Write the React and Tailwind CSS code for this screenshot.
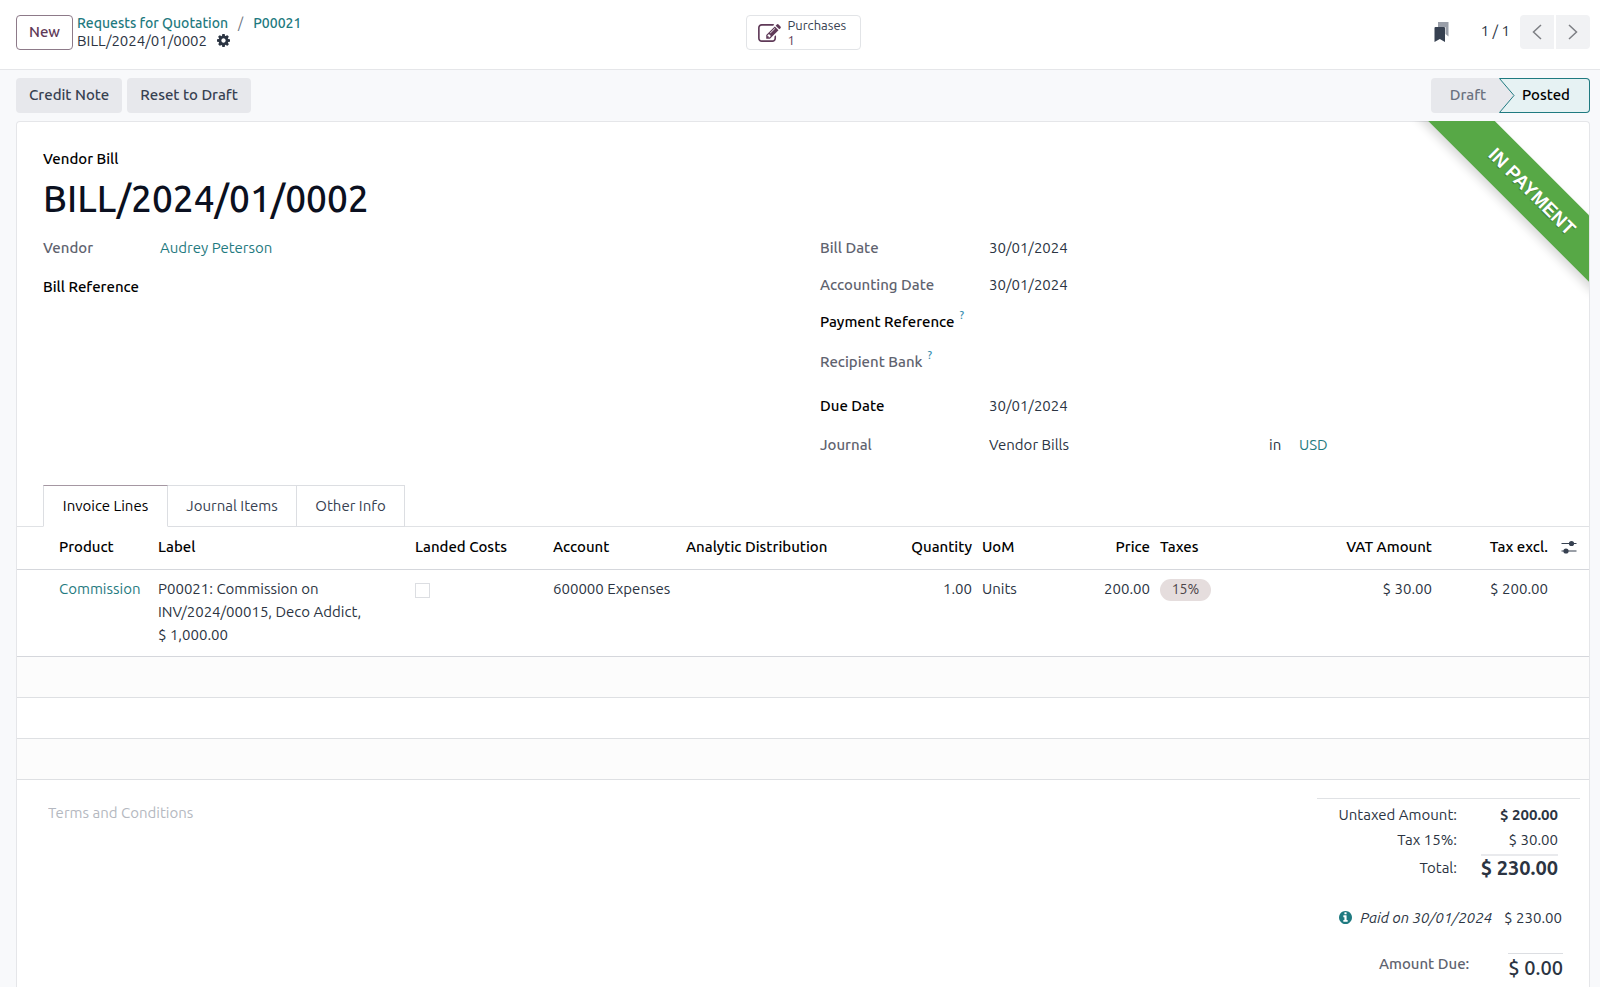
import React from "react";

const EMPTY_ROWS = [
  { id: 1, className: "h-[41px] border-b border-[#dee0e3] bg-[#fcfcfc]" },
  { id: 2, className: "h-[41px] border-b border-[#dee0e3] bg-white" },
  { id: 3, className: "h-[41px] border-b border-[#dee0e3] bg-[#fcfcfc]" },
];

function GearIcon() {
  return (
    <svg viewBox="0 128 1536 1536" className="size-[13px]" fill="currentColor" aria-hidden="true">
      <path d="M1024 896q0-106-75-181t-181-75-181 75-75 181 75 181 181 75 181-75 75-181zm512-109v222q0 12-8 23t-20 13l-185 28q-19 54-39 91 35 50 107 138 10 12 10 25t-9 23q-27 37-99 108t-94 71q-12 0-26-9l-138-108q-44 23-91 38-16 136-29 186-7 28-36 28h-222q-14 0-24.500-8.500t-11.500-21.500l-28-184q-49-16-90-37l-141 107q-10 9-25 9-14 0-25-11-126-114-165-168-7-10-7-23 0-12 8-23 15-21 51-66.500t54-70.500q-27-50-41-99l-183-27q-13-2-21-12.500t-8-23.500v-222q0-12 8-23t19-13l186-28q14-46 39-92-40-57-107-138-10-12-10-24 0-10 9-23 26-36 98.500-107.500t94.500-71.500q13 0 26 10l138 107q44-23 91-38 16-136 29-186 7-28 36-28h222q14 0 24.500 8.500t11.500 21.500l28 184q49 16 90 37l142-107q9-9 24-9 13 0 25 10 129 119 165 170 7 8 7 22 0 12-8 23-15 21-51 66.500t-54 70.500q26 50 41 98l183 28q13 2 21 12.500t8 23.500z" />
    </svg>
  );
}

function EditIcon() {
  return (
    <svg viewBox="0 128 1792 1408" className="h-[18px] w-[23px]" fill="currentColor" aria-hidden="true">
      <path d="M888 1184l116-116-152-152-116 116v56h96v96h56zm440-720q-16-16-33 1l-350 350q-17 17-1 33t33-1l350-350q17-17 1-33zm80 594v190q0 119-84.500 203.500t-203.500 84.500h-832q-119 0-203.500-84.500t-84.500-203.500v-832q0-119 84.500-203.500t203.500-84.500h832q63 0 117 25 15 7 18 23 3 17-9 29l-49 49q-14 14-32 8-23-6-45-6h-832q-66 0-113 47t-47 113v832q0 66 47 113t113 47h832q66 0 113-47t47-113v-126q0-13 9-22l64-64q15-15 35-7t20 29zm-96-738l288 288-672 672h-288v-288zm444 132l-92 92-288-288 92-92q28-28 68-28t68 28l152 152q28 28 28 68t-28 68z" />
    </svg>
  );
}

function InfoIcon() {
  return (
    <svg viewBox="0 128 1536 1536" className="size-[13px] text-[#1f7a80]" fill="currentColor" aria-hidden="true">
      <path d="M1024 1376v-160q0-14-9-23t-23-9h-96v-512q0-14-9-23t-23-9h-320q-14 0-23 9t-9 23v160q0 14 9 23t23 9h96v320h-96q-14 0-23 9t-9 23v160q0 14 9 23t23 9h448q14 0 23-9t9-23zm-128-896v-160q0-14-9-23t-23-9h-192q-14 0-23 9t-9 23v160q0 14 9 23t23 9h192q14 0 23-9t9-23zm640 416q0 209-103 385.500t-279.500 279.500-385.500 103-385.500-103-279.500-279.500-103-385.500 103-385.500 279.500-279.500 385.500-103 385.500 103 279.500 279.500 103 385.500z" />
    </svg>
  );
}

function BookmarksIcon() {
  return (
    <svg viewBox="0 0 15 20" className="h-5 w-[15px]" aria-hidden="true">
      <path d="M4 0h10.500v14.500l-3-2.500V5H4z" fill="#9a9fa9" />
      <path d="M1.500 5H10a1 1 0 0 1 1 1v14l-5.200-3L.5 20V6a1 1 0 0 1 1-1z" fill="#374151" />
    </svg>
  );
}

function Chevron({ direction }) {
  return (
    <svg viewBox="0 0 10 16" className="h-4 w-[10px]" fill="none" stroke="#7d7f84" strokeWidth="1.500" aria-hidden="true">
      <path d={direction === "left" ? "M9 1L1.500 8L9 15" : "M1 1L8.500 8L1 15"} />
    </svg>
  );
}

function SlidersIcon() {
  return (
    <svg viewBox="0 0 16 14" className="h-[14px] w-4" aria-hidden="true">
      <path d="M0.500 3.500H15.500M0.500 11H15.500" stroke="#374151" strokeWidth="1.200" />
      <circle cx="10.500" cy="3.500" r="2.600" fill="#374151" />
      <circle cx="5" cy="11" r="2.600" fill="#374151" />
    </svg>
  );
}

function ControlPanel() {
  return (
    <header className="grid h-[70px] grid-cols-[1fr_auto_1fr] items-start border-b border-[#e5e6e9] bg-white pt-[15px] pr-[10px] pl-4">
      <div className="flex gap-1">
        <button type="button" className="h-[35px] rounded border border-[#8d7a89] px-3 pb-[2px] font-medium text-[#5f3a58]">
          New
        </button>
        <nav aria-label="Breadcrumb" className="flex flex-col leading-[17px]">
          <div className="flex gap-[10px] text-[14px] font-medium">
            <a href="#quotations" className="text-[#1f7a80]">Requests for Quotation</a>
            <span className="font-normal text-[#6b7280]">/</span>
            <a href="#p00021" className="text-[#1f7a80]">P00021</a>
          </div>
          <div className="flex items-center gap-[10px]">
            <span>BILL/2024/01/0002</span>
            <button type="button" aria-label="Actions">
              <GearIcon />
            </button>
          </div>
        </nav>
      </div>
      <button type="button" className="flex h-[35px] w-[115px] items-center gap-[7px] rounded border border-[#e2e4e7] pl-[11px] text-left text-[13px] leading-[15px] text-[#5f3a58]">
        <EditIcon />
        <span className="flex flex-col">
          <span className="text-[#374151]">Purchases</span>
          <span>1</span>
        </span>
      </button>
      <div className="flex items-center justify-end">
        <button type="button" aria-label="Bookmarks" className="mr-8">
          <BookmarksIcon />
        </button>
        <span className="mr-[10px] pb-[2px]">1 / 1</span>
        <div className="flex gap-[2px]">
          <button type="button" aria-label="Previous" className="flex h-[34px] w-[34px] items-center justify-center rounded-l bg-[#f1f2f4]">
            <Chevron direction="left" />
          </button>
          <button type="button" aria-label="Next" className="flex h-[34px] w-[34px] items-center justify-center rounded-r bg-[#f1f2f4]">
            <Chevron direction="right" />
          </button>
        </div>
      </div>
    </header>
  );
}

function StatusBar() {
  return (
    <div className="flex items-center justify-between py-2 font-medium">
      <div className="flex gap-[5px]">
        <button type="button" className="h-[35px] rounded bg-[#e7e8ec] px-[13px] pb-[2px] text-[#374151]">Credit Note</button>
        <button type="button" className="h-[35px] rounded bg-[#e7e8ec] px-[13px] pb-[2px] text-[#374151]">Reset to Draft</button>
      </div>
      <div className="flex">
        <button type="button" className="h-[35px] w-[68px] rounded-l bg-[#e7e8ec] pb-[2px] pl-[6px] text-[#6b7280]">Draft</button>
        <button type="button" aria-current="step" className="flex h-[35px] text-black">
          <svg viewBox="0 0 16 35" className="h-[35px] w-4" aria-hidden="true">
            <path d="M0 0H16V35H0z" fill="#e6f2f3" />
            <path d="M0 0L15 17.500L0 35z" fill="#e7e8ec" />
            <path d="M16 0.500H0.500L15 17.500L0.500 34.500H16" fill="none" stroke="#1f7a80" />
          </svg>
          <span className="flex h-[35px] w-[75px] items-center rounded-r border-y border-r border-[#1f7a80] bg-[#e6f2f3] pb-[2px] pl-[7px]">Posted</span>
        </button>
      </div>
    </div>
  );
}

function Ribbon() {
  return (
    <div className="pointer-events-none absolute -top-px right-0 size-[180px] overflow-hidden">
      <div className="absolute top-[40px] right-[-64px] flex h-[47px] w-[256px] rotate-45 items-center justify-center bg-[#57a846] pl-5 font-['Liberation_Sans',sans-serif] text-[19px] font-bold text-white shadow-[0_5px_10px_rgba(0,0,0,0.15)] [text-shadow:0_1px_1px_rgba(0,0,0,0.3)]">
        IN PAYMENT
      </div>
    </div>
  );
}

function Help() {
  return <sup className="-top-2 ml-[5px] text-[11px] font-medium text-[#3a8fb0]">?</sup>;
}

function Field({ label, strong, help, height, children }) {
  return (
    <div className={"flex items-center " + height}>
      <dt className={"w-[169px] shrink-0 font-medium " + (strong ? "text-black" : "text-[#5f636f]")}>
        {label}
        {help && <Help />}
      </dt>
      <dd className="flex-1">{children}</dd>
    </div>
  );
}

function Fields() {
  return (
    <div className="grid grid-cols-2 pt-1">
      <dl>
        <div className="flex h-[36px] items-center">
          <dt className="w-[117px] font-medium text-[#5f636f]">Vendor</dt>
          <dd><a href="#vendor" className="text-[#1f7a80]">Audrey Peterson</a></dd>
        </div>
        <div className="flex h-[42px] items-center">
          <dt className="font-medium text-black">Bill Reference</dt>
        </div>
      </dl>
      <dl className="pl-[17px]">
        <Field label="Bill Date" height="h-[36px]">30/01/2024</Field>
        <Field label="Accounting Date" height="h-[37px]">30/01/2024</Field>
        <Field label="Payment Reference" strong help height="h-[37px]" />
        <Field label="Recipient Bank" help height="h-[43px]" />
        <Field label="Due Date" strong height="h-[45px]">30/01/2024</Field>
        <Field label="Journal" height="h-[34px]">
          <span className="flex">
            <span className="w-[280px]">Vendor Bills</span>
            <span className="w-[30px]">in</span>
            <a href="#usd" className="text-[#1f7a80]">USD</a>
          </span>
        </Field>
      </dl>
    </div>
  );
}

function Tabs() {
  return (
    <div className="flex border-b border-[#e0e2e5] pl-[26px]">
      <div role="tablist" className="-mb-px flex h-[42px] text-[#374151]">
        <button type="button" role="tab" aria-selected="true" className="w-[125px] border border-[#dcdee2] border-t-[#a597a2] border-b-white bg-white pb-px text-black">Invoice Lines</button>
        <button type="button" role="tab" aria-selected="false" className="w-[129px] border-y border-r border-[#dcdee2] pb-px">Journal Items</button>
        <button type="button" role="tab" aria-selected="false" className="w-[108px] border-y border-r border-[#dcdee2] pb-px">Other Info</button>
      </div>
    </div>
  );
}

function InvoiceLines() {
  return (
    <table className="w-full table-fixed border-collapse">
      <colgroup>
        <col className="w-[136px]" />
        <col className="w-[257px]" />
        <col className="w-[138px]" />
        <col className="w-[133px]" />
        <col />
        <col className="w-[80px]" />
        <col className="w-[80px]" />
        <col className="w-[98px]" />
        <col className="w-[150px]" />
        <col className="w-[132px]" />
        <col className="w-[116px]" />
        <col className="w-[36px]" />
      </colgroup>
      <thead>
        <tr className="h-[42px] border-b border-[#d5d7dc] text-left text-black *:pb-px *:font-medium">
          <th className="pr-[5px] pl-[42px]">Product</th>
          <th className="px-[5px]">Label</th>
          <th className="px-[5px]">Landed Costs</th>
          <th className="px-[5px]">Account</th>
          <th className="px-[5px]">Analytic Distribution</th>
          <th className="px-[5px] text-right">Quantity</th>
          <th className="px-[5px]">UoM</th>
          <th className="px-[5px] text-right">Price</th>
          <th className="px-[5px]">Taxes</th>
          <th className="px-[5px] text-right">VAT Amount</th>
          <th className="px-[5px] text-right">Tax excl.</th>
          <th className="pl-2">
            <button type="button" aria-label="Optional columns" className="block">
              <SlidersIcon />
            </button>
          </th>
        </tr>
      </thead>
      <tbody>
        <tr className="h-[87px] border-b border-[#d5d7dc] align-top leading-[23px] *:pt-[7px]">
          <td className="pr-[5px] pl-[42px]"><a href="#commission" className="text-[#1f7a80]">Commission</a></td>
          <td className="px-[5px]">P00021: Commission on<br />INV/2024/00015, Deco Addict,<br />$ 1,000.00</td>
          <td className="px-[5px]">
            <input type="checkbox" aria-label="Landed Costs" className="mt-[6px] block size-[15px] appearance-none border border-[#dcdee2] bg-white" />
          </td>
          <td className="px-[5px]">600000 Expenses</td>
          <td />
          <td className="px-[5px] text-right">1.00</td>
          <td className="px-[5px]">Units</td>
          <td className="px-[5px] text-right">200.00</td>
          <td className="px-[5px]">
            <span className="mt-[2px] flex h-[22px] w-[51px] items-center justify-center rounded-full bg-[#e5dddd] pb-px text-[14px] text-[#4b4448]">15%</span>
          </td>
          <td className="px-[5px] text-right">$ 30.00</td>
          <td className="px-[5px] text-right">$ 200.00</td>
          <td />
        </tr>
        {EMPTY_ROWS.map((row) => (
          <tr key={row.id} className={row.className}>
            <td colSpan={12} />
          </tr>
        ))}
      </tbody>
    </table>
  );
}

function Totals() {
  return (
    <div className="mt-[18px] mr-[9px] w-[263px] border-t border-[#e0e2e5]">
      <dl className="grid grid-cols-[140px_1fr] pr-[22px] text-right">
        <dt className="pt-[3px] leading-[25px]">Untaxed Amount:</dt>
        <dd className="pt-[3px] font-bold leading-[25px]">$ 200.00</dd>
        <dt className="leading-[25px]">Tax 15%:</dt>
        <dd className="leading-[25px]">$ 30.00</dd>
        <dt className="pt-[2px] leading-[27px]">Total:</dt>
        <dd className="pt-[2px]">
          <span className="inline-block border-t-2 border-[#e9eaed] text-[20px] leading-[23px] font-bold">$ 230.00</span>
        </dd>
      </dl>
      <div className="mt-[24px] flex items-center justify-end gap-2 pr-[18px] leading-[26px]">
        <button type="button" aria-label="Payment details"><InfoIcon /></button>
        <em className="mr-1">Paid on 30/01/2024</em>
        <span>$ 230.00</span>
      </div>
      <div className="mt-[22px] flex justify-end gap-[39px] pr-[17px]">
        <span className="font-medium text-[#5f636f] leading-[22px]">Amount Due:</span>
        <span className="border-t border-[#dcdee2] text-[20px] leading-[28px] font-medium">$ 0.00</span>
      </div>
    </div>
  );
}

export default function App() {
  return (
    <div className="flex min-h-screen flex-col bg-[#f8f9fb] font-['Ubuntu','Noto_Sans',sans-serif] text-[15px] leading-[20px] text-[#2b3442]">
      <ControlPanel />
      <main className="flex flex-1 flex-col pr-[10px] pl-4">
        <StatusBar />
        <section className="relative flex-1 rounded-t border border-b-0 border-[#e5e6e9] bg-white pt-[27px]">
          <Ribbon />
          <div className="h-[336px] px-[26px]">
            <p className="font-medium text-black">Vendor Bill</p>
            <h1 className="pt-[6px] pb-[3px] text-[37px] leading-[48px] font-medium text-[#0b1020]">BILL/2024/01/0002</h1>
            <Fields />
          </div>
          <Tabs />
          <InvoiceLines />
          <div className="flex justify-between">
            <textarea aria-label="Terms and Conditions" placeholder="Terms and Conditions" className="mt-[23px] ml-[31px] h-16 w-1/2 resize-none bg-transparent placeholder:text-[#b4b8c0]" />
            <Totals />
          </div>
        </section>
      </main>
    </div>
  );
}
